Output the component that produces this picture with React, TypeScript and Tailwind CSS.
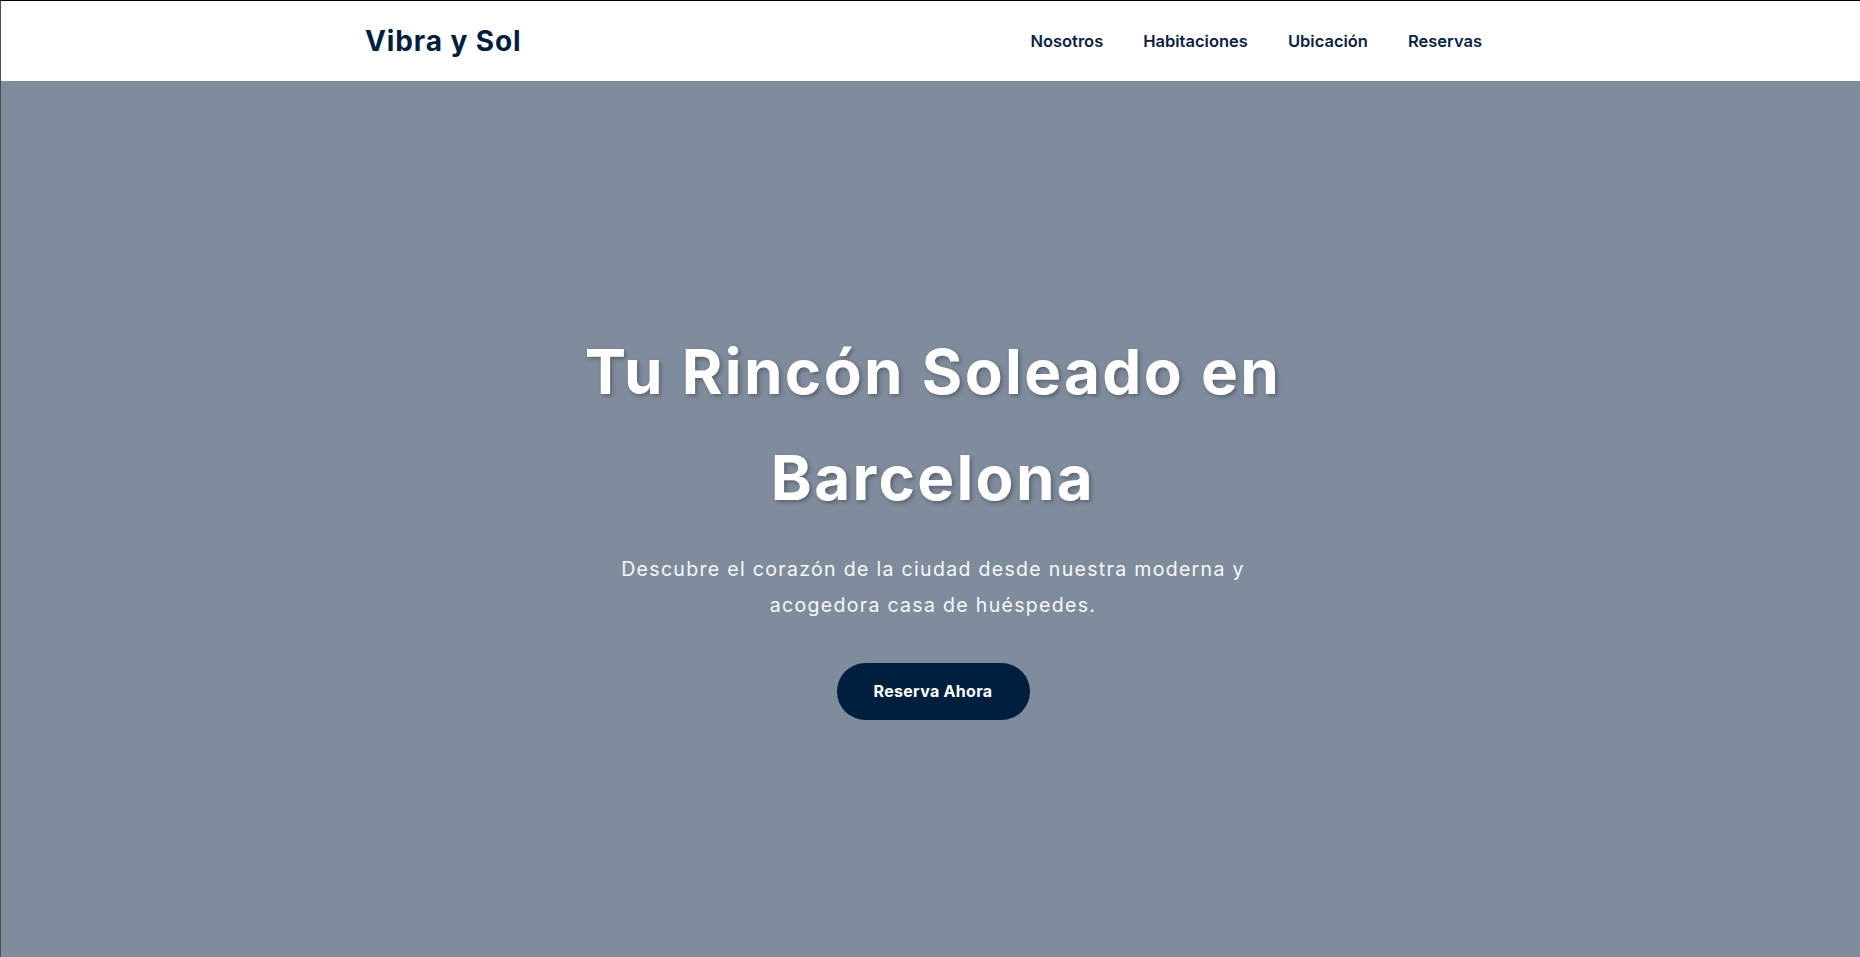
import React from "react";

export default function App() {
  const navItems = ["Nosotros", "Habitaciones", "Ubicación", "Reservas"];
  return (
    <div
      className="flex h-screen w-full flex-col overflow-hidden border-l border-t border-l-[#4d4d4d] border-t-black bg-white"
      style={{ fontFamily: "Inter, 'Noto Sans', sans-serif" }}
    >
      <header className="flex h-[80px] shrink-0 items-center justify-between bg-white pl-[364px] pr-[378px]">
        <div className="text-[28px] font-bold tracking-[0.9px] text-[#001f3f]">Vibra y Sol</div>
        <nav className="flex items-center gap-[40px]">
          {navItems.map((n) => (
            <a key={n} href="#" className="text-[16.5px] font-semibold text-[#0a2342]">
              {n}
            </a>
          ))}
        </nav>
      </header>
      <main className="flex flex-1 flex-col items-center justify-center bg-[#7f8c9c] pl-[5px] text-center">
        <h1
          className="text-[62px] font-bold leading-[106px] tracking-[2.3px] text-white"
          style={{ textShadow: "2px 2px 4px rgba(0,0,0,0.3)" }}
        >
          Tu Rincón Soleado en
          <br />
          Barcelona
        </h1>
        <p className="mt-[20px] max-w-[690px] text-[19.5px] leading-[36px] tracking-[1.32px] text-[#f7f8fa]">
          Descubre el corazón de la ciudad desde nuestra moderna y acogedora casa de huéspedes.
        </p>
        <a
          href="#"
          className="mt-[40px] flex h-[57px] w-[193px] items-center justify-center rounded-full bg-[#001f3f] text-[16px] font-bold tracking-[0.3px] text-white"
        >
          Reserva Ahora
        </a>
      </main>
    </div>
  );
}
